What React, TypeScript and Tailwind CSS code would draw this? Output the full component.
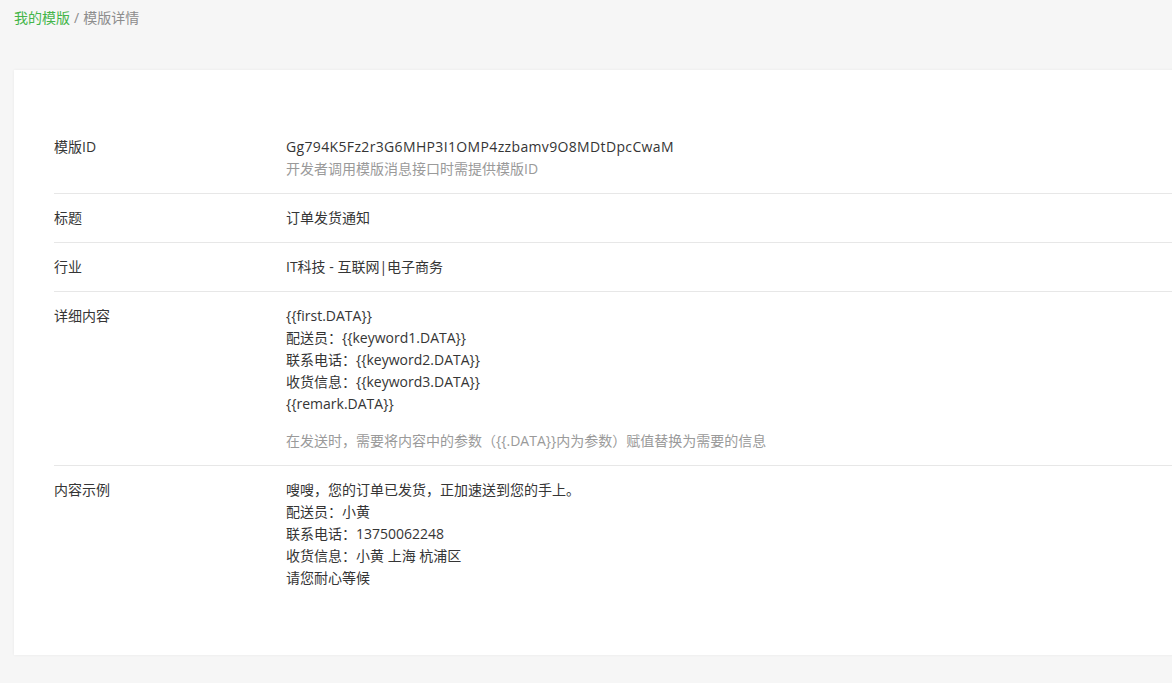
import React from 'react';

type Row = {
  label: string;
  lines: string[];
  note?: string;
  noteGap?: boolean;
  wide?: boolean;
};

const rows: Row[] = [
  {
    label: '模版ID',
    lines: ['Gg794K5Fz2r3G6MHP3I1OMP4zzbamv9O8MDtDpcCwaM'],
    note: '开发者调用模版消息接口时需提供模版ID',
    wide: true,
  },
  { label: '标题', lines: ['订单发货通知'] },
  { label: '行业', lines: ['IT科技 - 互联网|电子商务'] },
  {
    label: '详细内容',
    lines: [
      '{{first.DATA}}',
      '配送员：{{keyword1.DATA}}',
      '联系电话：{{keyword2.DATA}}',
      '收货信息：{{keyword3.DATA}}',
      '{{remark.DATA}}',
    ],
    note: '在发送时，需要将内容中的参数（{{.DATA}}内为参数）赋值替换为需要的信息',
    noteGap: true,
  },
  {
    label: '内容示例',
    lines: [
      '嗖嗖，您的订单已发货，正加速送到您的手上。',
      '配送员：小黄',
      '联系电话：13750062248',
      '收货信息：小黄 上海 杭浦区',
      '请您耐心等候',
    ],
  },
];

export default function App() {
  return (
    <div
      className="w-screen min-h-screen overflow-hidden bg-[#f6f6f6] text-[14px] text-[#353535]"
      style={{ fontFamily: '"Open Sans", "Noto Sans CJK SC", sans-serif' }}
    >
      {/* パンくず */}
      <div className="px-[14px] pt-[7px] h-[70px] leading-[22px]">
        <a className="text-[#44b549]">我的模版</a>
        <span className="text-[#8d8d8d] mx-[4px]">/</span>
        <span className="text-[#8d8d8d]">模版详情</span>
      </div>

      <div className="ml-[14px] w-[1200px] bg-white shadow-[0_0_3px_rgba(0,0,0,0.06)] pt-[53px] pb-[53px] pl-[40px]">
        {rows.map((row, i) => (
          <div
            key={row.label}
            className={`flex py-[13px] leading-[22px] ${i < rows.length - 1 ? 'border-b border-[#e7e7e7]' : ''}`}
          >
            <div className="w-[232px] shrink-0">{row.label}</div>
            <div>
              {row.lines.map((l) => (
                <div key={l} className={row.wide ? 'tracking-[0.35px]' : ''}>
                  {l}
                </div>
              ))}
              {row.note && (
                <div className={`text-[#9a9a9a] ${row.noteGap ? 'mt-[15px]' : ''}`}>{row.note}</div>
              )}
            </div>
          </div>
        ))}
      </div>
    </div>
  );
}
